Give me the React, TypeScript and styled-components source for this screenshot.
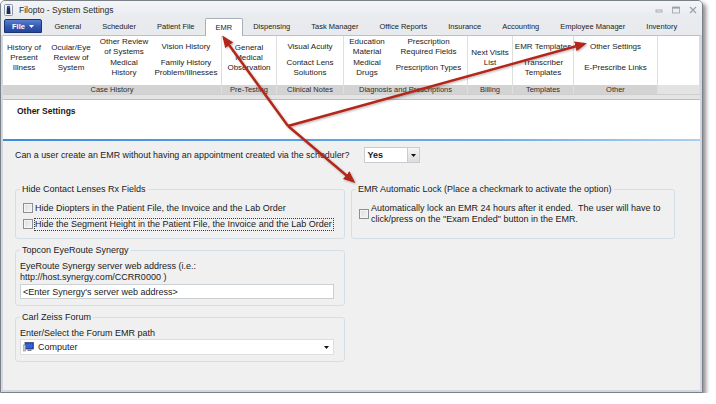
import React from "react";
import styled, { createGlobalStyle } from "styled-components";

const GlobalStyle = createGlobalStyle`
  html, body {
    margin: 0;
    padding: 0;
    background: #ffffff;
  }
  body {
    font-family: "Liberation Sans", Arial, sans-serif;
    color: #1b1b1b;
  }
`;

const Window = styled.div`
  position: relative;
  width: 703px;
  height: 393px;
  box-sizing: border-box;
  border: 1px solid #7b8188;
  border-radius: 5px 5px 0 0;
  background: #d3d8de;
  box-shadow: 3px 3px 4px rgba(0, 0, 0, 0.45);
  display: flex;
  flex-direction: column;
  padding: 0 2px 2px 2px;
  overflow: hidden;
`;

const TitleBar = styled.div`
  height: 17px;
  display: flex;
  align-items: center;
  padding: 0 2px 0 1px;
  background: linear-gradient(#f4f5f7, #e8ebee);
  margin: 0 -2px;
  padding-left: 3px;
`;

const TitleText = styled.span`
  margin-left: 6px;
  font-size: 8.5px;
  color: #2a2a2a;
  flex: 1;
`;

const Controls = styled.div`
  display: flex;
  align-items: center;
  gap: 9px;
  margin-right: 3px;
`;

const TabRow = styled.div`
  height: 17px;
  display: flex;
  align-items: flex-end;
  background: #e8eaed;
  margin: 0 -2px;
  padding-left: 3px;
  position: relative;
  z-index: 1;
`;

const FileButton = styled.div`
  width: 38px;
  height: 14px;
  margin-bottom: 2px;
  border-radius: 2px 2px 0 0;
  background: linear-gradient(#5a80d0, #3358b0 55%, #2447a0);
  border: 1px solid #1b3474;
  box-sizing: border-box;
  display: flex;
  align-items: center;
  justify-content: center;
  gap: 4px;
  color: #ffffff;
  font-size: 7.5px;
  font-weight: bold;
`;

const Tab = styled.div<{ $active?: boolean }>`
  height: ${({ $active }) => ($active ? "18px" : "16px")};
  line-height: ${({ $active }) => ($active ? "17px" : "16px")};
  padding: 0 ${({ $active }) => ($active ? "9.5px" : "10.5px")};
  font-size: 7.5px;
  color: #222;
  box-sizing: border-box;
  white-space: nowrap;
  background: ${({ $active }) => ($active ? "#ffffff" : "transparent")};
  border: ${({ $active }) => ($active ? "1px solid #a8b1bb" : "none")};
  border-bottom: none;
  border-radius: 2px 2px 0 0;
  margin-bottom: ${({ $active }) => ($active ? "-1px" : "0")};
`;

const Ribbon = styled.div`
  height: 59px;
  display: flex;
  background: #ffffff;
  border-top: 1px solid #b9c1ca;
  box-sizing: border-box;
`;

const Group = styled.div<{ $width?: number }>`
  width: ${({ $width }) => ($width ? `${$width}px` : "auto")};
  flex: ${({ $width }) => ($width ? "none" : "1")};
  box-sizing: border-box;
  border-right: 1px solid #dedede;
  display: flex;
  flex-direction: column;
`;

const GroupBody = styled.div`
  height: 49px;
  padding-bottom: 6px;
  box-sizing: border-box;
  display: flex;
`;

const Column = styled.div<{ $width?: number }>`
  width: ${({ $width }) => ($width ? `${$width}px` : "auto")};
  flex: ${({ $width }) => ($width ? "none" : "1")};
  display: flex;
  flex-direction: column;
`;

const Item = styled.div`
  flex: 1;
  display: flex;
  flex-direction: column;
  align-items: center;
  justify-content: center;
  text-align: center;
  font-size: 8px;
  line-height: 10px;
  color: #222;
  white-space: nowrap;
`;

const GroupLabel = styled.div<{ $empty?: boolean }>`
  height: 9px;
  line-height: 9px;
  text-align: center;
  font-size: 7.5px;
  color: #2f2f2f;
  background: ${({ $empty }) => ($empty ? "#e3e3e3" : "#d3d3d3")};
  white-space: nowrap;
`;

const Strip = styled.div`
  height: 6px;
  background: #e4e4e4;
  border-top: 1px solid #cfcfcf;
  border-bottom: 1px solid #b8bec4;
  box-sizing: border-box;
`;

const Header = styled.div`
  height: 39px;
  background: #ffffff;
  padding: 6px 0 0 14px;
  box-sizing: border-box;
  font-size: 8.5px;
  line-height: 11px;
  font-weight: bold;
  color: #1a1a1a;
`;

const BlueLine = styled.div`
  height: 2px;
  background: linear-gradient(to right, #3d8cdc, #6eaee8 70%, #a9cff2);
`;

const Content = styled.div`
  flex: 1;
  background: #f0f0f0;
  padding: 6px 0 0 12px;
  font-size: 9px;
  color: #1a1a1a;
`;

const QuestionRow = styled.div`
  height: 16px;
  display: flex;
  align-items: center;
  font-size: 8.9px;
`;

const Select = styled.div`
  margin-left: 14px;
  width: 56px;
  height: 16px;
  box-sizing: border-box;
  border: 1px solid #c9cdd1;
  background: #ffffff;
  display: flex;
  align-items: center;
  font-weight: bold;
  font-size: 9px;
  padding-left: 3px;
`;

const SelectValue = styled.span`
  flex: 1;
`;

const DropButton = styled.div`
  width: 11px;
  height: 14px;
  border-left: 1px solid #c9cdd1;
  background: linear-gradient(#f6f6f6, #dcdcdc);
  display: flex;
  align-items: center;
  justify-content: center;
`;

const Grid = styled.div`
  margin-top: 21px;
  display: grid;
  grid-template-columns: 330px 324px;
  column-gap: 6px;
  row-gap: 6px;
  align-items: stretch;
`;

const Fieldset = styled.fieldset<{ $padTop?: number; $col?: number; $row?: number }>`
  margin: 0;
  min-width: 0;
  border: 1px solid #d6dee5;
  border-radius: 3px;
  padding: ${({ $padTop }) => $padTop ?? 5}px 10px 6px 4px;
  grid-column: ${({ $col }) => $col ?? 1};
  grid-row: ${({ $row }) => $row ?? "auto"};
`;

const Legend = styled.legend`
  padding: 0 2px;
  font-size: 9px;
  line-height: 11px;
  color: #1a1a1a;
`;

const CheckRow = styled.div`
  height: 16px;
  display: flex;
  align-items: center;
  margin-left: 3px;
  gap: 2px;
  white-space: nowrap;
`;

const CheckBox = styled.span`
  width: 10px;
  height: 10px;
  flex: none;
  box-sizing: border-box;
  border: 1px solid #8e8f90;
  background: linear-gradient(135deg, #dcdcdc, #f7f7f7);
  box-shadow: inset 0 0 0 1px #f4f4f4;
`;

const FocusLabel = styled.span`
  border: 1px dotted #3a3a3a;
  padding: 0 1px 0 0;
  margin-left: -1px;
  line-height: 11px;
`;

const LockRow = styled.div`
  display: flex;
  align-items: center;
  margin-left: 3px;
  gap: 2px;
`;

const LockText = styled.div`
  line-height: 11px;
  white-space: nowrap;
`;

const FieldLabel = styled.div`
  line-height: 11px;
`;

const TextInput = styled.div`
  margin-top: 1px;
  height: 15px;
  box-sizing: border-box;
  border: 1px solid #cbd0d4;
  background: #ffffff;
  padding-left: 2px;
  display: flex;
  align-items: center;
`;

const Combo = styled.div`
  height: 16px;
  box-sizing: border-box;
  border: 1px solid #dcdfe2;
  background: #ffffff;
  padding: 0 4px 0 2px;
  display: flex;
  align-items: center;
  gap: 4px;
`;

const ComboText = styled.span`
  flex: 1;
`;

const ArrowLayer = styled.svg`
  position: absolute;
  left: 0;
  top: 0;
  pointer-events: none;
  z-index: 5;
`;

const tabs = [
  "General",
  "Scheduler",
  "Patient File",
  "EMR",
  "Dispensing",
  "Task Manager",
  "Office Reports",
  "Insurance",
  "Accounting",
  "Employee Manager",
  "Inventory",
];

type RibbonColumn = { width?: number; items: string[][] };
type RibbonGroup = { label: string; width: number; columns: RibbonColumn[] };

const groups: RibbonGroup[] = [
  {
    label: "Case History",
    width: 219,
    columns: [
      { width: 42, items: [["History of", "Present", "Illness"]] },
      { width: 52, items: [["Ocular/Eye", "Review of", "System"]] },
      { width: 54, items: [["Other Review", "of Systems"], ["Medical", "History"]] },
      { width: 70, items: [["Vision History"], ["Family History", "Problem/Illnesses"]] },
    ],
  },
  { label: "Pre-Testing", width: 55, columns: [{ items: [["General", "Medical", "Observation"]] }] },
  {
    label: "Clinical Notes",
    width: 67,
    columns: [{ items: [["Visual Acuity"], ["Contact Lens", "Solutions"]] }],
  },
  {
    label: "Diagnosis and Prescriptions",
    width: 124,
    columns: [
      { width: 46, items: [["Education", "Material"], ["Medical", "Drugs"]] },
      { width: 77, items: [["Prescription", "Required Fields"], ["Prescription Types"]] },
    ],
  },
  { label: "Billing", width: 45, columns: [{ items: [["Next Visits", "List"]] }] },
  {
    label: "Templates",
    width: 61,
    columns: [{ items: [["EMR Templates"], ["Transcriber", "Templates"]] }],
  },
  {
    label: "Other",
    width: 84,
    columns: [{ items: [["Other Settings"], ["E-Prescribe Links"]] }],
  },
];

const AppIcon = () => (
  <svg width="9" height="12" viewBox="0 0 9 12">
    <rect x="0.5" y="0.5" width="8" height="11" rx="1" fill="#f4f6fa" stroke="#8b95a3" />
    <path d="M3 2 L6 2 L6.5 10 L2.5 10 Z" fill="#1c2a55" />
    <circle cx="4.5" cy="3" r="1.3" fill="#3a5ca8" />
  </svg>
);

const WindowControls = () => (
  <Controls>
    <svg width="8" height="8" viewBox="0 0 8 8">
      <rect x="1" y="4" width="6" height="2" fill="none" stroke="#9aa1a8" strokeWidth="0.8" />
    </svg>
    <svg width="8" height="8" viewBox="0 0 8 8">
      <rect x="0.5" y="1" width="7" height="6" fill="none" stroke="#9aa1a8" strokeWidth="0.8" />
      <rect x="0.5" y="1" width="7" height="1.6" fill="#9aa1a8" />
    </svg>
    <svg width="8" height="8" viewBox="0 0 8 8">
      <path d="M1 1 L7 7 M7 1 L1 7" stroke="#9aa1a8" strokeWidth="1.2" />
    </svg>
  </Controls>
);

const Caret = ({ color = "#111" }: { color?: string }) => (
  <svg width="5" height="3" viewBox="0 0 5 3">
    <path d="M0 0 L5 0 L2.5 3 Z" fill={color} />
  </svg>
);

const ComputerIcon = () => (
  <svg width="11" height="10" viewBox="0 0 11 10">
    <rect x="2" y="0.5" width="8.5" height="6.5" fill="#1f3fb5" stroke="#4a4f5a" strokeWidth="0.8" />
    <rect x="3" y="1.5" width="6.5" height="4.5" fill="#2d63e0" />
    <rect x="0" y="3" width="2.5" height="6" fill="#c8cbd0" stroke="#7c8088" strokeWidth="0.6" />
    <rect x="4.5" y="7.5" width="4" height="1.5" fill="#7c8088" />
  </svg>
);

const Arrows = () => (
  <ArrowLayer width="716" height="404" viewBox="0 0 716 404">
    <defs>
      <marker
        id="head"
        markerWidth="12"
        markerHeight="10"
        refX="9"
        refY="5"
        orient="auto"
        markerUnits="userSpaceOnUse"
      >
        <path d="M0 0 L12 5 L0 10 Z" fill="#b3261a" />
      </marker>
      <filter id="shade" x="-10%" y="-10%" width="120%" height="120%">
        <feDropShadow dx="1" dy="1" stdDeviation="0.8" floodColor="#000" floodOpacity="0.3" />
      </filter>
    </defs>
    <g stroke="#b3261a" strokeWidth="2.4" fill="none" filter="url(#shade)">
      <line x1="288" y1="126" x2="224" y2="38" markerEnd="url(#head)" />
      <line x1="288" y1="126" x2="353" y2="181" markerEnd="url(#head)" />
      <line x1="288" y1="126" x2="584" y2="44" markerEnd="url(#head)" />
    </g>
  </ArrowLayer>
);

const App = () => {
  return (
    <>
      <GlobalStyle />
      <Window>
        <TitleBar>
          <AppIcon />
          <TitleText>Filopto - System Settings</TitleText>
          <WindowControls />
        </TitleBar>
        <TabRow>
          <FileButton>
            File
            <Caret color="#ffffff" />
          </FileButton>
          <div style={{ width: 2 }} />
          {tabs.map((t) => (
            <Tab key={t} $active={t === "EMR"}>
              {t}
            </Tab>
          ))}
        </TabRow>
        <Ribbon>
          {groups.map((g) => (
            <Group key={g.label} $width={g.width}>
              <GroupBody>
                {g.columns.map((c, ci) => (
                  <Column key={ci} $width={c.width}>
                    {c.items.map((lines, ii) => (
                      <Item key={ii}>
                        {lines.map((l) => (
                          <span key={l}>{l}</span>
                        ))}
                      </Item>
                    ))}
                  </Column>
                ))}
              </GroupBody>
              <GroupLabel>{g.label}</GroupLabel>
            </Group>
          ))}
          <Group>
            <GroupBody />
            <GroupLabel $empty />
          </Group>
        </Ribbon>
        <Strip />
        <Header>Other Settings</Header>
        <BlueLine />
        <Content>
          <QuestionRow>
            Can a user create an EMR without having an appointment created via the scheduler?
            <Select>
              <SelectValue>Yes</SelectValue>
              <DropButton>
                <Caret />
              </DropButton>
            </Select>
          </QuestionRow>
          <Grid>
            <Fieldset $col={1} $row={1}>
              <Legend>Hide Contact Lenses Rx Fields</Legend>
              <CheckRow>
                <CheckBox />
                <span>Hide Diopters in the Patient File, the Invoice and the Lab Order</span>
              </CheckRow>
              <CheckRow>
                <CheckBox />
                <FocusLabel>
                  Hide the Segment Height in the Patient File, the Invoice and the Lab Order
                </FocusLabel>
              </CheckRow>
            </Fieldset>
            <Fieldset $col={2} $row={1} $padTop={8}>
              <Legend>EMR Automatic Lock (Place a checkmark to activate the option)</Legend>
              <LockRow>
                <CheckBox />
                <LockText>
                  Automatically lock an EMR 24 hours after it ended.{"\u00a0 "}The user will have to
                  <br />
                  click/press on the "Exam Ended" button in the EMR.
                </LockText>
              </LockRow>
            </Fieldset>
            <Fieldset $col={1} $row={2}>
              <Legend>Topcon EyeRoute Synergy</Legend>
              <FieldLabel>
                EyeRoute Synergy server web address (i.e.:
                <br />
                http://host.synergy.com/CCRR0000 )
              </FieldLabel>
              <TextInput>&lt;Enter Synergy's server web address&gt;</TextInput>
            </Fieldset>
            <Fieldset $col={1} $row={3}>
              <Legend>Carl Zeiss Forum</Legend>
              <FieldLabel>Enter/Select the Forum EMR path</FieldLabel>
              <Combo>
                <ComputerIcon />
                <ComboText>Computer</ComboText>
                <Caret />
              </Combo>
            </Fieldset>
          </Grid>
        </Content>
      </Window>
      <Arrows />
    </>
  );
};

export default App;
